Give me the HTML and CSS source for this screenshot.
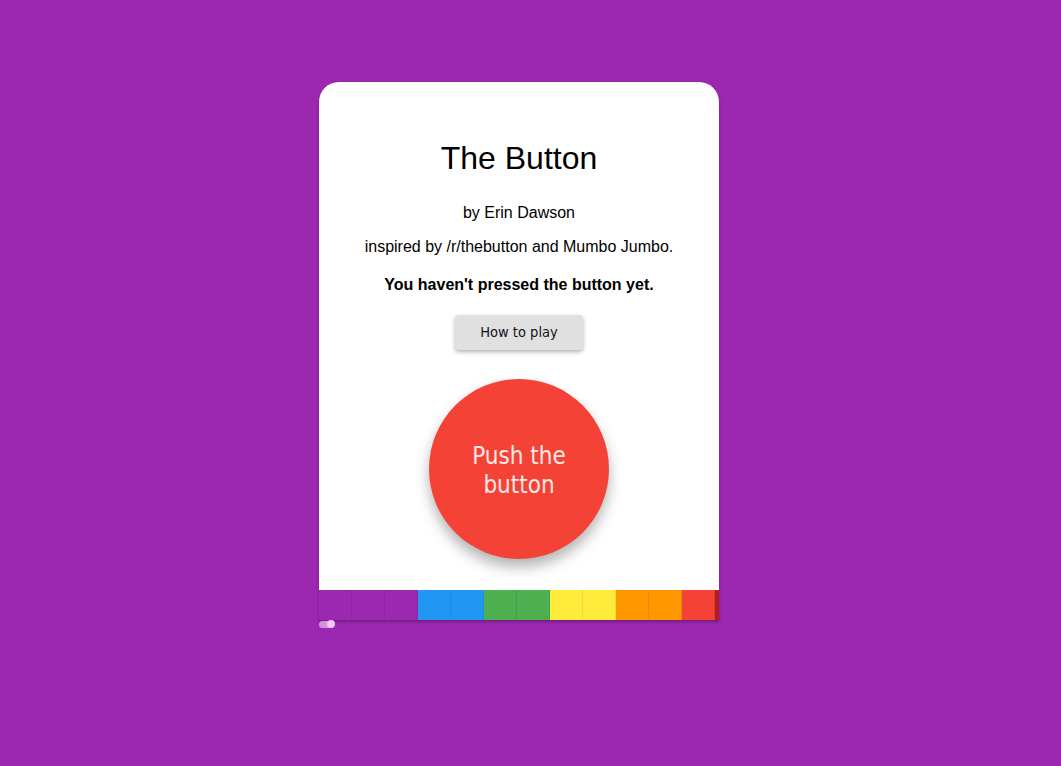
FILE: index.html
```html
<!DOCTYPE html>
<html>
<head>
<meta charset="utf-8">
<link rel="stylesheet" href="styles.css">
</head>
<body>
<div class="page">
  <div class="card">
    <div class="content">
      <h1 class="title">The Button</h1>
      <p class="line by">by Erin Dawson</p>
      <p class="line inspired">inspired by /r/thebutton and Mumbo Jumbo.</p>
      <p class="line status">You haven't pressed the button yet.</p>
      <button class="howto">How to play</button>
      <button class="push">Push the<br>button</button>
    </div>
    <div class="bar">
      <span class="seg purple"></span>
      <span class="seg purple"></span>
      <span class="seg purple"></span>
      <span class="seg blue"></span>
      <span class="seg blue"></span>
      <span class="seg green"></span>
      <span class="seg green"></span>
      <span class="seg yellow"></span>
      <span class="seg yellow"></span>
      <span class="seg orange"></span>
      <span class="seg orange"></span>
      <span class="seg red"></span>
      <span class="seg darkred"></span>
    </div>
  </div>
  <div class="toggle"><span class="track"></span><span class="thumb"></span></div>
</div>
</body>
</html>
```
FILE: styles.css
```css
html, body {
  margin: 0;
  padding: 0;
  background: #9c27b0;
  height: 100%;
}
body {
  font-family: "Liberation Sans", Arial, sans-serif;
  color: #000;
}
.page {
  width: 400px;
  margin-left: calc(50% - 211.5px);
  padding-top: 82px;
}
.card {
  width: 400px;
  height: 538px;
  background: #fff;
  border-radius: 20px 20px 0 0;
  box-shadow: 0 2px 3px rgba(0,0,0,0.25);
  display: flex;
  flex-direction: column;
  overflow: hidden;
}
.content {
  flex: 1;
  display: flex;
  flex-direction: column;
  align-items: center;
}
.title {
  font-weight: normal;
  font-size: 32px;
  line-height: 37px;
  margin: 58px 0 0;
}
.line {
  font-size: 16px;
  line-height: 18px;
  margin: 0;
  text-align: center;
}
.by { margin-top: 27px; }
.inspired { margin-top: 16px; }
.status { font-weight: bold; margin-top: 20px; }
.howto {
  margin-top: 21px;
  width: 128px;
  height: 35px;
  border: none;
  border-radius: 4px;
  background: #e0e0e0;
  box-shadow: 0 2px 4px rgba(0,0,0,0.3);
  font-family: "DejaVu Sans Condensed", "DejaVu Sans", sans-serif;
  font-size: 14.5px;
  color: #111;
  padding: 0 0 2px;
}
.push {
  margin-top: 29px;
  width: 180px;
  height: 180px;
  border-radius: 50%;
  border: none;
  background: #f44336;
  color: #fde8e6;
  font-family: "DejaVu Sans Condensed", "DejaVu Sans", sans-serif;
  font-size: 24px;
  line-height: 29px;
  box-shadow: 0 8px 14px rgba(0,0,0,0.3);
  padding: 4px 0 0;
}
.bar {
  height: 30px;
  display: flex;
  margin-top: 31px;
  overflow: hidden;
  flex-shrink: 0;
}
.seg {
  flex: 0 0 33px;
  height: 30px;
  box-sizing: border-box;
  border-right: 1px solid rgba(0,0,0,0.07);
}
.purple { background: #9c27b0; }
.blue { background: #2196f3; }
.green { background: #4caf50; }
.yellow { background: #ffeb3b; }
.orange { background: #ff9800; }
.red { background: #f44336; }
.darkred { background: #b71c1c; border: none; }
.toggle {
  position: relative;
  width: 17px;
  height: 9px;
}
.track {
  position: absolute;
  left: 0;
  top: 1px;
  width: 14px;
  height: 7px;
  border-radius: 4px;
  background: #d690e0;
}
.thumb {
  position: absolute;
  left: 8px;
  top: 0;
  width: 8px;
  height: 8px;
  border-radius: 50%;
  background: #f7c8f8;
}
```
